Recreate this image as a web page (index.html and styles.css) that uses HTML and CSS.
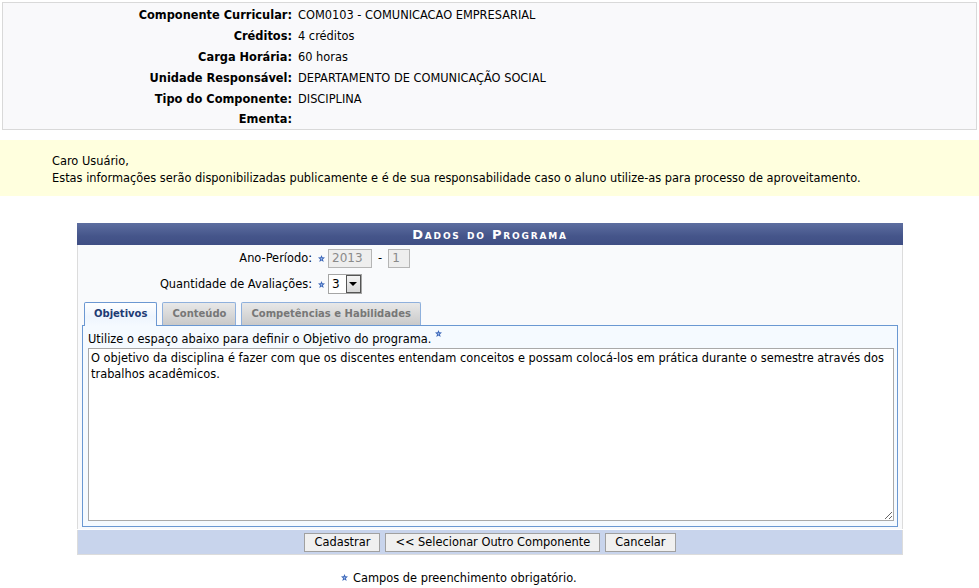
FILE: index.html
```html
<!DOCTYPE html>
<html lang="pt-BR">
<head>
<meta charset="utf-8">
<title>Dados do Programa</title>
<link rel="stylesheet" href="styles.css">
</head>
<body>
<div class="info">
  <div class="irow"><span class="ilabel">Componente Curricular:</span><span class="ival">COM0103 - COMUNICACAO EMPRESARIAL</span></div>
  <div class="irow"><span class="ilabel">Créditos:</span><span class="ival">4 créditos</span></div>
  <div class="irow"><span class="ilabel">Carga Horária:</span><span class="ival">60 horas</span></div>
  <div class="irow"><span class="ilabel">Unidade Responsável:</span><span class="ival">DEPARTAMENTO DE COMUNICAÇÃO SOCIAL</span></div>
  <div class="irow"><span class="ilabel">Tipo do Componente:</span><span class="ival">DISCIPLINA</span></div>
  <div class="irow"><span class="ilabel">Ementa:</span><span class="ival"></span></div>
</div>

<div class="notice">
  <p>Caro Usuário,</p>
  <p>Estas informações serão disponibilizadas publicamente e é de sua responsabilidade caso o aluno utilize-as para processo de aproveitamento.</p>
</div>

<div class="form">
  <div class="fhead">Dados do Programa</div>
  <div class="fbody">
    <div class="frow">
      <span class="flabel">Ano-Período:</span>
      <svg class="star" viewBox="0 0 10 10" width="7" height="7"><polygon points="5,0 6.3,3.3 10,3.6 7.1,6 8.1,10 5,7.8 1.9,10 2.9,6 0,3.6 3.7,3.3" fill="#3b66b8"/><circle cx="5" cy="5.4" r="1.3" fill="#9bb8ea"/></svg>
      <span class="inp w43">2013</span>
      <span class="dash">-</span>
      <span class="inp w22">1</span>
    </div>
    <div class="frow">
      <span class="flabel">Quantidade de Avaliações:</span>
      <svg class="star" viewBox="0 0 10 10" width="7" height="7"><polygon points="5,0 6.3,3.3 10,3.6 7.1,6 8.1,10 5,7.8 1.9,10 2.9,6 0,3.6 3.7,3.3" fill="#3b66b8"/><circle cx="5" cy="5.4" r="1.3" fill="#9bb8ea"/></svg>
      <span class="sel"><span class="selval">3</span><span class="selbtn"><svg viewBox="0 0 8 4" width="8" height="4"><polygon points="0,0 8,0 4,4" fill="#000"/></svg></span></span>
    </div>

    <div class="tabs">
      <span class="tab active">Objetivos</span>
      <span class="tab">Conteúdo</span>
      <span class="tab">Competências e Habilidades</span>
    </div>
    <div class="panel">
      <div class="plabel">Utilize o espaço abaixo para definir o Objetivo do programa. <svg class="star up" viewBox="0 0 10 10" width="7" height="7"><polygon points="5,0 6.3,3.3 10,3.6 7.1,6 8.1,10 5,7.8 1.9,10 2.9,6 0,3.6 3.7,3.3" fill="#3b66b8"/><circle cx="5" cy="5.4" r="1.3" fill="#9bb8ea"/></svg></div>
      <textarea class="ta">O objetivo da disciplina é fazer com que os discentes entendam conceitos e possam colocá-los em prática durante o semestre através dos trabalhos acadêmicos.</textarea>
    </div>
  </div>
  <div class="fbar">
    <button class="btn">Cadastrar</button>
    <button class="btn">&lt;&lt; Selecionar Outro Componente</button>
    <button class="btn">Cancelar</button>
  </div>
  <div class="req"><svg class="star" viewBox="0 0 10 10" width="7" height="7"><polygon points="5,0 6.3,3.3 10,3.6 7.1,6 8.1,10 5,7.8 1.9,10 2.9,6 0,3.6 3.7,3.3" fill="#3b66b8"/><circle cx="5" cy="5.4" r="1.3" fill="#9bb8ea"/></svg> Campos de preenchimento obrigatório.</div>
</div>
</body>
</html>
```

FILE: styles.css
```css
html, body {
  margin: 0;
  padding: 0;
  background: #fff;
}
body {
  font-family: "DejaVu Sans", Verdana, sans-serif;
  font-size: 11.4px;
  color: #000;
}

.info {
  margin: 2px 2px 0 2px;
  border: 1px solid #d9d9d9;
  background: #f9f9fb;
  padding-top: 1px;
}
.irow {
  display: flex;
  height: 21px;
  align-items: center;
}
.irow:last-child {
  height: 20px;
}
.ilabel {
  width: 289px;
  text-align: right;
  font-weight: bold;
  flex: none;
}
.ival {
  padding-left: 6px;
}

.notice {
  margin-top: 10px;
  background: #ffffde;
  padding: 13px 52px 9px 52px;
}
.notice p {
  margin: 0;
  line-height: 17px;
}

.form {
  margin: 27px 0 0 77px;
  width: 826px;
}
.fhead {
  height: 22px;
  line-height: 23px;
  background: linear-gradient(#5d6ea0, #45558a 60%, #3f4e84);
  color: #fff;
  font-weight: bold;
  font-variant: small-caps;
  letter-spacing: 1.8px;
  text-align: center;
  font-size: 13px;
}
.fbody {
  background: #f9fafc;
  border-left: 1px solid #dcdcdc;
  border-right: 1px solid #dcdcdc;
  padding: 3px 3px 2px 3px;
}
.frow {
  display: flex;
  align-items: center;
  height: 20px;
  margin-bottom: 6px;
}
.flabel {
  width: 231px;
  text-align: right;
  flex: none;
}
.star {
  margin: 0 3px 0 6px;
  flex: none;
}
.inp {
  box-sizing: border-box;
  height: 19px;
  border: 1px solid #b5b5b5;
  background: #eeeeee;
  color: #8a8a8a;
  padding: 0 3px;
  line-height: 17px;
  font-size: 12px;
}
.w43 { width: 44px; }
.w22 { width: 22px; }
.dash {
  margin: 0 6px;
}
.sel {
  box-sizing: border-box;
  display: flex;
  width: 34px;
  height: 20px;
  border: 1px solid #a5a5a5;
  background: #fff;
}
.selval {
  width: 15px;
  padding-left: 3px;
  line-height: 18px;
  font-size: 12px;
  color: #000;
}
.selbtn {
  box-sizing: border-box;
  width: 16px;
  height: 18px;
  border: 1px solid #555;
  background: linear-gradient(#f4f4f4, #d8d8d8);
  display: flex;
  align-items: center;
  justify-content: center;
}

.tabs {
  display: flex;
  gap: 5px;
  margin-top: 8px;
  padding-left: 3px;
  height: 23px;
  position: relative;
  z-index: 1;
}
.tab {
  box-sizing: border-box;
  height: 23px;
  padding: 0 9px;
  line-height: 22px;
  font-size: 10px;
  font-weight: bold;
  color: #777;
  border: 1px solid #8fb0dc;
  border-bottom: none;
  border-radius: 2px 2px 0 0;
  background: linear-gradient(#e8e8e8, #c9c9c9);
}
.tab.active {
  color: #1d3b74;
  height: 24px;
  border-color: #6c98d2;
  background: linear-gradient(#ffffff, #eef5fe 60%, #f5faff);
}
.panel {
  box-sizing: border-box;
  border: 1px solid #6a98d2;
  background: #f5faff;
  margin: 0 1px;
  padding: 4px 5px 5px 5px;
}
.plabel {
  line-height: 14px;
  margin-bottom: 2px;
}
.star.up {
  vertical-align: 6px;
  margin: 0;
}
.ta {
  display: block;
  box-sizing: border-box;
  width: 806px;
  height: 173px;
  border: 1px solid #a9a9a9;
  background: #fff;
  font-family: "DejaVu Sans", Verdana, sans-serif;
  font-size: 11.4px;
  line-height: 16px;
  padding: 1px 2px;
  color: #000;
  resize: vertical;
  margin: 0;
}

.fbar {
  margin-top: 1px;
  background: #c8d4ec;
  border: 1px solid #dcdcdc;
  border-top: none;
  height: 25px;
  box-sizing: border-box;
  display: flex;
  justify-content: center;
  align-items: center;
  gap: 5px;
}
.btn {
  box-sizing: border-box;
  height: 19px;
  padding: 0 9px;
  border: 1px solid #a0a0a0;
  background: #f0f0f0;
  font-family: "DejaVu Sans", Verdana, sans-serif;
  font-size: 11.4px;
  color: #000;
  line-height: 17px;
}

.req {
  margin-top: 16px;
  text-align: center;
  padding-right: 62px;
  line-height: 14px;
}
.req .star {
  margin: 0 1px 0 0;
  vertical-align: 1px;
}
```
